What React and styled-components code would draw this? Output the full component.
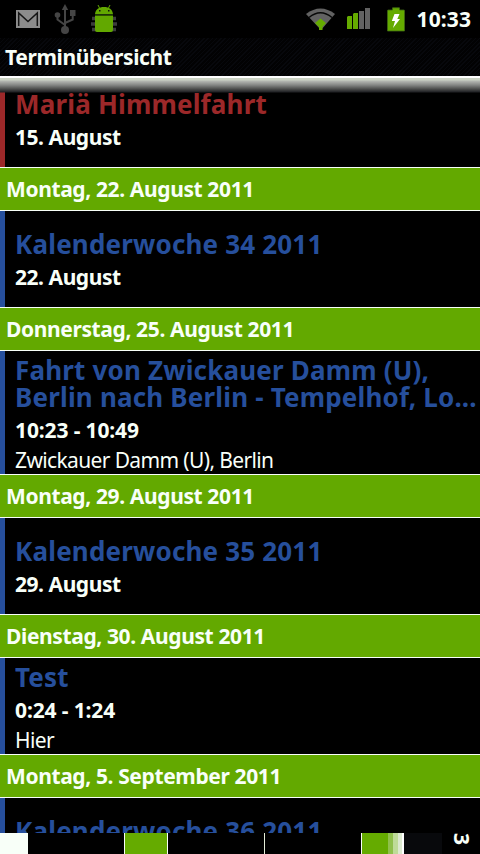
import React from 'react'
import styled, { createGlobalStyle } from 'styled-components'

const GlobalStyle = createGlobalStyle`
html, body{
margin:0;
background:#000;
}
`

const days = [
    { events: [{ title: ["Mariä Himmelfahrt"], time: "15. August", color: "#9c2829" }] },
    { day: "Montag, 22. August 2011", events: [{ title: ["Kalenderwoche 34 2011"], time: "22. August" }] },
    {
        day: "Donnerstag, 25. August 2011",
        events: [{
            title: ["Fahrt von Zwickauer Damm (U),", "Berlin nach Berlin - Tempelhof, Lo..."],
            time: "10:23 - 10:49",
            place: "Zwickauer Damm (U), Berlin"
        }]
    },
    { day: "Montag, 29. August 2011", events: [{ title: ["Kalenderwoche 35 2011"], time: "29. August" }] },
    { day: "Dienstag, 30. August 2011", events: [{ title: ["Test"], time: "0:24 - 1:24", place: "Hier" }] },
    { day: "Montag, 5. September 2011", events: [{ title: ["Kalenderwoche 36 2011"] }] },
]

function MailIcon() {
    return (
        <svg width="24" height="18" viewBox="0 0 24 18">
            <path fill="#8c8c8c" d="M0 0h24v18H0z" />
            <path fill="none" stroke="#161616" strokeWidth="1.5" d="M2.700 16V3l9.300 8.500L21.300 3v13" />
        </svg>
    )
}

function UsbIcon() {
    return (
        <svg width="22" height="30" viewBox="0 0 22 30" fill="#454545">
            <path d="M11 0l3.200 6H7.800z" />
            <circle cx="11" cy="26" r="4" />
            <circle cx="3.500" cy="11" r="2.800" />
            <path d="M16 6h5.500v6H16z" />
            <path fill="none" stroke="#454545" strokeWidth="2" d="M11 4v22M3.500 11v4.500L11 21M18.700 11v4.500L11 19" />
        </svg>
    )
}

function DebugIcon() {
    return (
        <svg width="28" height="28" viewBox="0 0 28 28">
            <path stroke="#3c3c3c" strokeWidth="3.500" fill="none" d="M2 13.500h5M1 19h5M2 24.500h5M21 13.500h5M22 19h5M21 24.500h5" />
            <path stroke="#62a800" strokeWidth="1" d="M8 0l2 4M20 0l-2 4" />
            <path fill="#62a800" d="M5 9C5.500 4.500 9 2 14 2s8.500 2.500 9 7zM5 10.500h18V25q0 2-2 2H7q-2 0-2-2z" />
            <path stroke="#24400a" d="M5 9.700h18" />
            <path fill="#111" d="M9 5h1.500v1.500H9zM18 5h1.500v1.500H18z" />
        </svg>
    )
}

function WifiIcon() {
    return (
        <svg width="30" height="23" viewBox="0 0 30 23">
            <path fill="#626262" d="M0 6Q14.500-5 29 6L15 22z" />
            <path fill="none" stroke="#080808" strokeWidth="1.400" d="M3 9.500Q14.500 0 26 9.500" />
            <path fill="#65ab00" d="M9 15L12 12.500 14.500 10.500 17 12.500 20 15 16.500 19v3h-3.500v-3z" />
        </svg>
    )
}

function SignalIcon() {
    return (
        <svg width="24" height="22" viewBox="0 0 24 22">
            <path fill="#65ab00" d="M0 9l1-1h4v13H0zM6 6l1-1h4v16H6z" />
            <path fill="#626262" d="M12 3h5v18h-5zM18 0h5v21h-5z" />
        </svg>
    )
}

function BatteryIcon() {
    return (
        <svg width="18" height="25" viewBox="0 0 18 25">
            <path fill="#65ab00" stroke="#3e6711" strokeWidth=".8" d="M5.500 3V.8h7V3H17q.5 0 .5.800V24H.5V3.800Q.5 3 1 3z" />
            <path fill="#fff" d="M7.500 7h5l-2.200 5h2.700L6 21l2-7H4.800z" />
        </svg>
    )
}

function Event({ event }) {
    const color = event.color || "#264f9c"
    return (
        <EventRow $color={color} $tall={event.title.length > 1} $place={!!event.place}>
            {event.title.map((line) => <EventTitle key={line} $color={color}>{line}</EventTitle>)}
            <EventTime $wide={!!event.place}>{event.time}</EventTime>
            {event.place && <EventPlace>{event.place}</EventPlace>}
        </EventRow>
    )
}

function App() {
    return (
        <Screen>
            <GlobalStyle />
            <StatusBar>
                <StatusIcons $gap="14px">
                    <MailIcon />
                    <UsbIcon />
                    <DebugIcon />
                </StatusIcons>
                <StatusIcons $gap="11px">
                    <WifiIcon />
                    <SignalIcon />
                    <Battery><BatteryIcon /></Battery>
                    <Clock>10:33</Clock>
                </StatusIcons>
            </StatusBar>
            <TitleBar>Terminübersicht</TitleBar>
            <Agenda>
                <Shade />
                <AgendaList>
                    {days.map((d, i) => (
                        <React.Fragment key={i}>
                            {d.day && <DayHeader>{d.day}</DayHeader>}
                            {d.events.map((e) => <Event key={e.title[0]} event={e} />)}
                        </React.Fragment>
                    ))}
                </AgendaList>
            </Agenda>
            <BottomStrip>
                <Cell $width="28px" $bg="#f8fff8" />
                <Cell $width="96px" />
                <Cell $width="44px" $bg="#65ab00" $line="both" />
                <Cell $width="96px" />
                <Cell $width="1px" $bg="#e4ecd8" />
                <Cell $width="96px" />
                <Cell $width="27px" $bg="#65ab00" $line="left" />
                <Cell $width="5px" $bg="#8fc04c" />
                <Cell $width="5px" $bg="#bedb98" />
                <Cell $width="4px" $bg="#dce9d0" />
                <Cell $width="2px" $bg="#fff" />
                <Cell $width="38px" $bg="#08090c" />
                <SideDigit>3</SideDigit>
            </BottomStrip>
        </Screen>
    )
}

const Screen = styled.div`
width:480px;
height:854px;
display:flex;
flex-direction:column;
overflow:hidden;
background:#000;
color:#f8fff8;
font-family:"Noto Sans",sans-serif;
font-size:21px;
font-weight:700;
white-space:nowrap;
`
const StatusBar = styled.div`
flex:none;
height:38px;
box-sizing:border-box;
padding:0 9px 0 16px;
display:flex;
justify-content:space-between;
align-items:center;
`
const StatusIcons = styled.div`
display:flex;
align-items:center;
gap:${(p) => p.$gap};
`
const Battery = styled.span`
display:flex;
margin:0 1px 0 5px;
`
const Clock = styled.span`
font-size:21px;
line-height:38px;
letter-spacing:0.1px;
`
const TitleBar = styled.div`
flex:none;
height:38px;
padding-left:5px;
line-height:39px;
font-size:21px;
letter-spacing:-0.38px;
background:repeating-linear-gradient(135deg, #07080c 0 1px, #020203 1px 3px);
`
const Agenda = styled.div`
position:relative;
flex:none;
height:757px;
display:flex;
flex-direction:column;
overflow:hidden;
`
const AgendaList = styled.div`
display:flex;
flex-direction:column;
margin-top:-5px;
`
/* scroll edge that lies over the first row */
const Shade = styled.div`
position:absolute;
top:0;
left:0;
right:0;
height:17px;
background:linear-gradient(#fff 0 2px, #cbd3c4 2px 4px, #b5b8b3 5px, #858785 9px, #4c4d4c 13px, #202124 16px, rgba(0,0,0,0) 17px);
`
const DayHeader = styled.div`
flex:none;
height:44px;
box-sizing:border-box;
border-top:1px solid #f8fff8;
border-bottom:1px solid #f8fff8;
padding-left:6px;
line-height:43px;
letter-spacing:-0.38px;
background:#63a900;
`
const EventRow = styled.div`
flex:none;
height:${(p) => (p.$tall ? 123 : 96)}px;
box-sizing:border-box;
border-left:5px solid ${(p) => p.$color};
padding:${(p) => (p.$place ? 7 : 3)}px 0 0 10px;
display:flex;
flex-direction:column;
justify-content:center;
overflow:hidden;
`
const EventTitle = styled.div`
flex:none;
height:27px;
font-size:26px;
line-height:29px;
letter-spacing:0.18px;
color:${(p) => p.$color};
`
const EventTime = styled.div`
flex:none;
height:30px;
margin-top:5px;
line-height:30px;
letter-spacing:${(p) => (p.$wide ? "-0.13px" : "-0.45px")};
`
const EventPlace = styled.div`
flex:none;
line-height:31px;
font-weight:400;
letter-spacing:-0.63px;
`
const BottomStrip = styled.div`
flex:none;
height:21px;
display:flex;
overflow:hidden;
`
const Cell = styled.div`
flex:none;
width:${(p) => p.$width};
box-sizing:border-box;
background:${(p) => p.$bg || "#000"};
border-left:${(p) => (p.$line ? "1px solid #f8fff8" : "none")};
border-right:${(p) => (p.$line === "both" ? "1px solid #f8fff8" : "none")};
`
const SideDigit = styled.div`
width:36px;
height:11px;
writing-mode:vertical-rl;
line-height:33px;
`
export default App
